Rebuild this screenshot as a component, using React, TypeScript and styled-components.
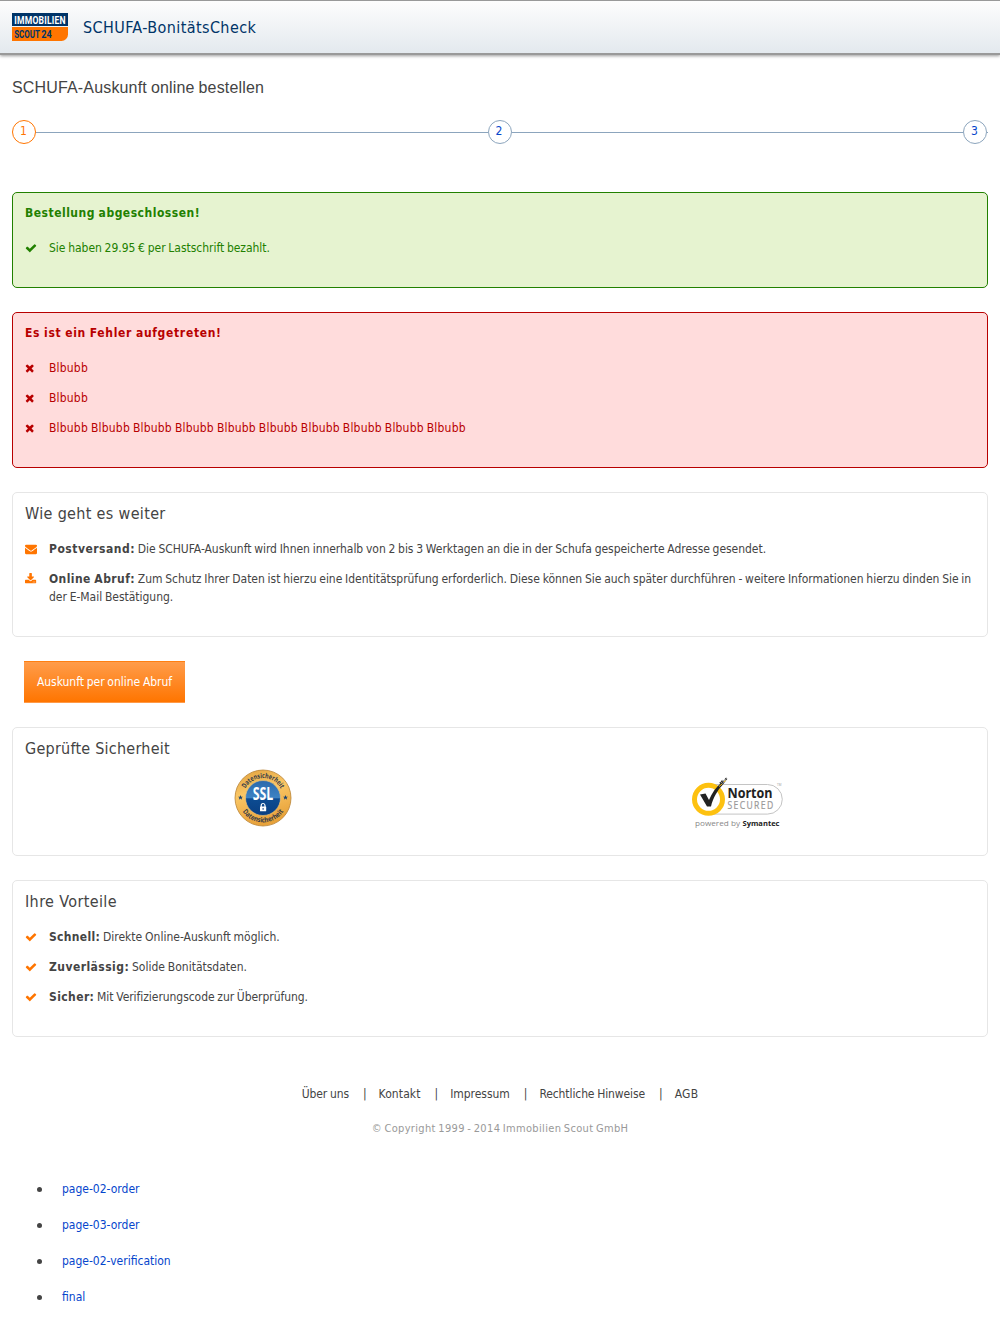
import React from 'react';
import styled, { createGlobalStyle } from 'styled-components';

const sans = `"DejaVu Sans Condensed", "DejaVu Sans", sans-serif`;

const GlobalStyle = createGlobalStyle`
  body {
    margin: 0;
    background: #fff;
    color: #444;
    font-family: ${sans};
    font-stretch: condensed;
    font-size: 12px;
    line-height: 18px;
    word-spacing: -0.6px;
  }
  a { color: inherit; text-decoration: none; }
  h1, h2, h3, p, ul { margin: 0; padding: 0; font-weight: normal; }
  ul { list-style: none; }
`;

const Page = styled.div`
  height: 1327px;
  overflow: hidden;
`;

const Header = styled.header`
  display: flex;
  align-items: center;
  gap: 15px;
  box-sizing: border-box;
  height: 55px;
  padding: 0 12px 1px;
  border-top: 1px solid #999;
  border-bottom: 2px solid #999;
  background: linear-gradient(#fdfdfd, #e3e9ee);
  box-shadow: 0 1px 3px rgba(0, 0, 0, 0.4);
`;

const Brand = styled.h1`
  padding-top: 2px;
  color: #003468;
  font-size: 16px;
  line-height: 24px;
  letter-spacing: 0.4px;
`;

const Main = styled.main`
  display: flex;
  flex-direction: column;
  padding: 0 12px;
`;

const PageTitle = styled.h2`
  margin-top: 21px;
  font-family: "Liberation Sans", Arial, sans-serif;
  font-size: 16px;
  line-height: 24px;
  letter-spacing: 0.16px;
`;

const Steps = styled.div`
  display: flex;
  align-items: center;
  margin: 20px 0 48px;
`;

const Step = styled.a<{ $active?: boolean }>`
  flex: none;
  box-sizing: border-box;
  width: 24px;
  height: 24px;
  padding-right: 1px;
  border: 1px solid ${p => (p.$active ? '#ff7500' : '#8ca5bd')};
  border-radius: 50%;
  color: ${p => (p.$active ? '#ff7500' : '#0646cc')};
  line-height: 20px;
  text-align: center;
`;

const StepLine = styled.span<{ $end?: boolean }>`
  flex: ${p => (p.$end ? '0 0 1px' : '1')};
  height: 1px;
  margin-top: 1px;
  background: #8ca5bd;
`;

type Tone = 'success' | 'error' | 'plain';
const tones = {
  success: { color: '#228000', border: '#228000', background: '#e6f3d0' },
  error: { color: '#b80000', border: '#b80000', background: '#ffdcdc' },
  plain: { color: '#444', border: '#e6e6e6', background: '#fff' },
};

const Box = styled.section<{ $tone: Tone }>`
  margin-bottom: 24px;
  padding: 11px 12px 30px;
  border: 1px solid ${p => tones[p.$tone].border};
  border-radius: 5px;
  color: ${p => tones[p.$tone].color};
  background: ${p => tones[p.$tone].background};
`;

const AlertTitle = styled.h3<{ $track: number }>`
  margin-bottom: 17px;
  font-size: 12px;
  font-weight: bold;
  letter-spacing: ${p => p.$track}px;
`;

const BoxTitle = styled.h3<{ $track: number }>`
  margin-bottom: 17px;
  padding-top: 1px;
  font-size: 16px;
  line-height: 18px;
  word-spacing: 0;
  letter-spacing: ${p => p.$track}px;
`;

const List = styled.ul`
  display: flex;
  flex-direction: column;
  gap: 12px;
`;

const Item = styled.li`
  display: flex;
`;

const IconSlot = styled.span<{ $accent: boolean }>`
  flex: 0 0 24px;
  height: 17px;
  display: flex;
  align-items: center;
  color: ${p => (p.$accent ? '#ff7500' : 'inherit')};
`;

const ItemText = styled.p<{ $track: number }>`
  flex: 1;
  letter-spacing: ${p => p.$track}px;
`;

const Term = styled.b<{ $track: number }>`
  letter-spacing: ${p => p.$track}px;
`;

const icons = {
  check: {
    x: 0,
    d: 'M1671 566q0 40-28 68l-724 724-136 136q-28 28-68 28t-68-28l-136-136-362-362q-28-28-28-68t28-68l136-136q28-28 68-28t68 28l294 295 656-657q28-28 68-28t68 28l136 136q28 28 28 68z',
  },
  times: {
    x: 192,
    d: 'M1490 1322q0 40-28 68l-136 136q-28 28-68 28t-68-28l-294-294-294 294q-28 28-68 28t-68-28l-136-136q-28-28-28-68t28-68l294-294-294-294q-28-28-28-68t28-68l136-136q28-28 68-28t68 28l294 294 294-294q28-28 68-28t68 28l136 136q28 28 28 68t-28 68l-294 294 294 294q28 28 28 68z',
  },
  envelope: {
    x: 0,
    d: 'M1792 710v794q0 66-47 113t-113 47h-1472q-66 0-113-47t-47-113v-794q44 49 101 87 362 246 497 345 57 42 92.5 65.5t94.5 48 110 24.5h2q51 0 110-24.5t94.5-48 92.5-65.5q170-123 498-345 57-39 100-87zm0-294q0 79-49 151t-122 123q-376 261-468 325-10 7-42.5 31t-54 38.5-52 32.5-57.5 27-50 9h-2q-23 0-50-9t-57.5-27-52-32.5-54-38.5-42.5-31q-91-64-262-182.5t-205-142.5q-62-42-117-115.5t-55-136.5q0-78 41.5-130t118.5-52h1472q65 0 112.5 47t47.5 113z',
  },
  download: {
    x: 64,
    d: 'M1344 1344q0-26-19-45t-45-19-45 19-19 45 19 45 45 19 45-19 19-45zm256 0q0-26-19-45t-45-19-45 19-19 45 19 45 45 19 45-19 19-45zm128-224v320q0 40-28 68t-68 28h-1472q-40 0-68-28t-28-68v-320q0-40 28-68t68-28h465l135 136q58 56 136 56t136-56l136-136h464q40 0 68 28t28 68zm-325-569q17 41-14 70l-448 448q-18 19-45 19t-45-19l-448-448q-31-29-14-70 17-39 59-39h256v-448q0-26 19-45t45-19h256q26 0 45 19t19 45v448h256q42 0 59 39z',
  },
};

interface RowProps {
  icon: keyof typeof icons;
  accent?: boolean;
  track?: number;
  children: React.ReactNode;
}

function Row({ icon, accent = false, track = 0, children }: RowProps) {
  return (
    <Item>
      <IconSlot $accent={accent}>
        <svg width="12" height="12" viewBox={`${icons[icon].x} 0 1792 1792`} fill="currentColor">
          <path d={icons[icon].d} />
        </svg>
      </IconSlot>
      <ItemText $track={track}>{children}</ItemText>
    </Item>
  );
}

const Button = styled.button`
  align-self: flex-start;
  box-sizing: border-box;
  width: 161px;
  height: 42px;
  margin: 0 0 24px 12px;
  padding: 0;
  border: 0 solid;
  border-width: 1px 0;
  border-color: #ff7f11 transparent #ff9a48;
  background: linear-gradient(#ff9c4a, #ff7500) padding-box;
  color: #fff;
  font: inherit;
  word-spacing: -0.6px;
  letter-spacing: -0.03px;
`;

const Seals = styled.div`
  display: flex;
  height: 67px;
  margin-top: -6px;
  margin-bottom: -11px;
`;

const Seal = styled.div<{ $top: number }>`
  flex: 1;
  display: flex;
  justify-content: center;
  padding-top: ${p => p.$top}px;
`;

const Footer = styled.footer`
  display: flex;
  flex-direction: column;
  align-items: center;
  margin-top: 24px;
`;

const FooterLinks = styled.nav`
  display: flex;
  gap: 12px;
`;

const FooterLink = styled.a<{ $track: number }>`
  letter-spacing: ${p => p.$track}px;
`;

const Divider = styled.span`
  margin-left: 2px;
`;

const Copyright = styled.p`
  margin-top: 17px;
  color: #999;
  font-size: 11px;
  letter-spacing: 0.34px;
  word-spacing: -1px;
`;

const PageList = styled.ul`
  display: flex;
  flex-direction: column;
  gap: 18px;
  margin-top: 42px;
  padding-left: 24px;
`;

const PageLink = styled.li`
  display: flex;
  align-items: center;
  gap: 20px;
  color: #0646cc;
  &::before {
    content: '';
    width: 5px;
    height: 5px;
    margin-left: 1px;
    border-radius: 50%;
    background: #444;
  }
`;

const Drawing = styled.svg`
  flex: none;
  overflow: visible;
  word-spacing: 0;
  font-stretch: normal;
`;

function Logo() {
  return (
    <Drawing width="56" height="28" viewBox="0 0 56 28">
      <path d="M0 0h56v13H0z" fill="#003468" />
      <path d="M0 14h56v7.500a6.500 6.500 0 0 1-6.500 6.500H0z" fill="#ff7500" />
      <g fontFamily="Roboto, sans-serif" fontWeight="700" fontSize="11" transform="scale(0.780 1)">
        <text x="2.800" y="10.700" fill="#fff" textLength="66">IMMOBILIEN</text>
        <text x="2.800" y="24.900" fill="#003468" textLength="33" lengthAdjust="spacingAndGlyphs">SCOUT</text>
        <text x="37.500" y="24.900" fill="#003468" textLength="13.500" lengthAdjust="spacingAndGlyphs">24</text>
      </g>
    </Drawing>
  );
}

const star = 'M0-2.600L.700-.800 2.500-.800 1.100.350 1.600 2.200 0 1.100-1.600 2.200-1.100.350-2.500-.800-.700-.800z';

function SslSeal() {
  return (
    <Drawing width="58" height="58" viewBox="0 0 58 58">
      <defs>
        <linearGradient id="gold" x1="0" y1="0" x2="0.300" y2="1">
          <stop offset="0" stopColor="#e0a03c" />
          <stop offset="0.450" stopColor="#fac766" />
          <stop offset="1" stopColor="#e8a23a" />
        </linearGradient>
        <linearGradient id="blue" x1="0" y1="0" x2="0" y2="1">
          <stop offset="0" stopColor="#2c69ab" />
          <stop offset="0.500" stopColor="#3d83c4" />
          <stop offset="0.520" stopColor="#0d4c92" />
          <stop offset="1" stopColor="#0a3f82" />
        </linearGradient>
        <path id="arcTop" d="M9 29a20 20 0 0 1 40 0" />
        <path id="arcBottom" d="M4.500 29a24.500 24.500 0 0 0 49 0" />
      </defs>
      <circle cx="29" cy="29" r="28" fill="url(#gold)" stroke="#b98437" strokeWidth="0.800" />
      <circle cx="29" cy="29" r="17.500" fill="url(#blue)" stroke="#f3c77c" strokeWidth="0.600" />
      <g fontFamily="'Open Sans', sans-serif" fontWeight="700" fontSize="7" fill="#303848" textAnchor="middle">
        <text><textPath href="#arcTop" startOffset="50%" textLength="43" lengthAdjust="spacingAndGlyphs">Datensicherheit</textPath></text>
        <text><textPath href="#arcBottom" startOffset="50%" textLength="48" lengthAdjust="spacingAndGlyphs">Datensicherheit</textPath></text>
      </g>
      <path d={star} transform="translate(6.500 28.500)" fill="#17406f" />
      <path d={star} transform="translate(51.500 28.500)" fill="#17406f" />
      <text x="29" y="31" fontFamily="'Open Sans', sans-serif" fontWeight="700" fontSize="17" fill="#fff" textAnchor="middle" textLength="20.500" lengthAdjust="spacingAndGlyphs">SSL</text>
      <path d="M27.200 38v-1.600a1.900 1.900 0 0 1 3.800 0V38" fill="none" stroke="#fff" strokeWidth="1.200" />
      <rect x="26" y="37.500" width="6.200" height="4.800" rx="0.500" fill="#fff" />
      <path d="M29.100 39v1.800" stroke="#0a3f82" />
    </Drawing>
  );
}

function NortonSeal() {
  return (
    <Drawing width="94" height="52" viewBox="0 0 94 52">
      <path d="M24 7.500H76.500a14.800 14.800 0 0 1 0 29.600H20" fill="#fff" stroke="#c4c4c4" />
      <circle cx="17.500" cy="22.300" r="14" fill="#fff" stroke="#fdc110" strokeWidth="5" />
      <path d="M9 17.500L14.500 16.500 18 23C21 16 25 10 30.500 5.500L32 7.500C26.500 13 22 21 20 29.500L16 29.500z" fill="#222" />
      <path d="M29 6.500l3-3M31.500 6.500l3-3.500M34.500 2.500l1.500-1.500" stroke="#333" strokeWidth="2" strokeDasharray="1.500 0.500" />
      <path d="M28 9.500l3-2.500M33 5l1.500-1.500" stroke="#fdc110" />
      <text x="36.500" y="21" fontFamily="'Open Sans', sans-serif" fontWeight="700" fontSize="15" fill="#222" textLength="45" lengthAdjust="spacingAndGlyphs">Norton</text>
      <text x="42.500" y="32.500" transform="scale(0.860 1)" fontFamily="'Open Sans', sans-serif" fontSize="10" fill="#999" stroke="#999" strokeWidth="0.200" textLength="53">SECURED</text>
      <text x="86" y="9" fontFamily="'Open Sans', sans-serif" fontSize="3" fill="#999">TM</text>
      <text x="4" y="49" fontFamily="'Open Sans', sans-serif" fontSize="7.500" fill="#888" textLength="45" lengthAdjust="spacingAndGlyphs">powered by</text>
      <text x="51.500" y="49" fontFamily="'Open Sans', sans-serif" fontWeight="700" fontSize="7.500" fill="#222" textLength="37" lengthAdjust="spacingAndGlyphs">Symantec</text>
    </Drawing>
  );
}

const footerLinks = [
  { label: 'Über uns', track: -0.1 },
  { label: 'Kontakt', track: 0.1 },
  { label: 'Impressum', track: -0.05 },
  { label: 'Rechtliche Hinweise', track: -0.1 },
  { label: 'AGB', track: 0.2 },
];
const pages = ['page-02-order', 'page-03-order', 'page-02-verification', 'final'];

export default function App() {
  return (
    <Page>
      <GlobalStyle />
      <Header>
        <Logo />
        <Brand>SCHUFA-BonitätsCheck</Brand>
      </Header>
      <Main>
        <PageTitle>SCHUFA-Auskunft online bestellen</PageTitle>
        <Steps>
          <Step $active>1</Step>
          <StepLine />
          <Step>2</Step>
          <StepLine />
          <Step>3</Step>
          <StepLine $end />
        </Steps>
        <Box $tone="success">
          <AlertTitle $track={0.5}>Bestellung abgeschlossen!</AlertTitle>
          <List>
            <Row icon="check" track={-0.035}>Sie haben 29.95 € per Lastschrift bezahlt.</Row>
          </List>
        </Box>
        <Box $tone="error">
          <AlertTitle $track={0.68}>Es ist ein Fehler aufgetreten!</AlertTitle>
          <List>
            <Row icon="times" track={0.19}>Blbubb</Row>
            <Row icon="times" track={0.19}>Blbubb</Row>
            <Row icon="times" track={0.19}>Blbubb Blbubb Blbubb Blbubb Blbubb Blbubb Blbubb Blbubb Blbubb Blbubb</Row>
          </List>
        </Box>
        <Box $tone="plain">
          <BoxTitle $track={0.33}>Wie geht es weiter</BoxTitle>
          <List>
            <Row icon="envelope" accent track={-0.04}>
              <Term $track={0.5}>Postversand:</Term> Die SCHUFA-Auskunft wird Ihnen innerhalb von 2 bis 3 Werktagen an die in der Schufa gespeicherte Adresse gesendet.
            </Row>
            <Row icon="download" accent track={-0.025}>
              <Term $track={0.42}>Online Abruf:</Term> Zum Schutz Ihrer Daten ist hierzu eine Identitätsprüfung erforderlich. Diese können Sie auch später durchführen - weitere Informationen hierzu dinden Sie in der E-Mail Bestätigung.
            </Row>
          </List>
        </Box>
        <Button>Auskunft per online Abruf</Button>
        <Box $tone="plain">
          <BoxTitle $track={0.24}>Geprüfte Sicherheit</BoxTitle>
          <Seals>
            <Seal $top={0}><SslSeal /></Seal>
            <Seal $top={8}><NortonSeal /></Seal>
          </Seals>
        </Box>
        <Box $tone="plain">
          <BoxTitle $track={0.38}>Ihre Vorteile</BoxTitle>
          <List>
            <Row icon="check" accent><Term $track={0.32}>Schnell:</Term> Direkte Online-Auskunft möglich.</Row>
            <Row icon="check" accent><Term $track={0.45}>Zuverlässig:</Term> Solide Bonitätsdaten.</Row>
            <Row icon="check" accent track={-0.055}><Term $track={0.4}>Sicher:</Term> Mit Verifizierungscode zur Überprüfung.</Row>
          </List>
        </Box>
        <Footer>
          <FooterLinks>
            {footerLinks.map(({ label, track }, i) => (
              <React.Fragment key={label}>
                {i > 0 && <Divider>|</Divider>}
                <FooterLink $track={track}>{label}</FooterLink>
              </React.Fragment>
            ))}
          </FooterLinks>
          <Copyright>© Copyright 1999 - 2014 Immobilien Scout GmbH</Copyright>
        </Footer>
        <PageList>
          {pages.map(name => (
            <PageLink key={name}><a>{name}</a></PageLink>
          ))}
        </PageList>
      </Main>
    </Page>
  );
}
